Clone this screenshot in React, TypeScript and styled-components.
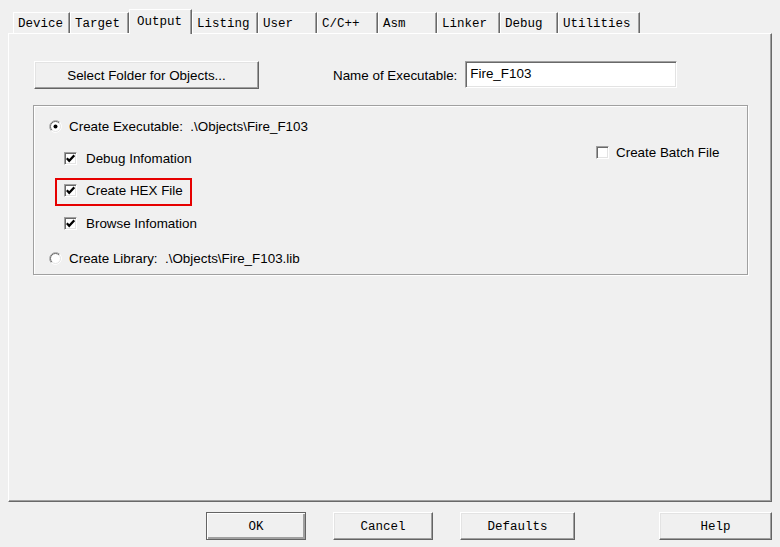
import React from "react";
import styled, { createGlobalStyle } from "styled-components";

const Global = createGlobalStyle`
  html, body { margin: 0; padding: 0; background: #f0f0f0; }
  body { font-family: "Liberation Sans", Arial, sans-serif; }
  * { box-sizing: border-box; }
`;

const SANS = 13.4;

const Window = styled.div`
  width: 780px;
  height: 547px;
  background: #f0f0f0;
  display: flex;
  flex-direction: column;
  overflow: hidden;
  color: #000;
`;

const TabBar = styled.div`
  height: 33px;
  padding: 9px 0 0 13px;
  display: flex;
  align-items: flex-end;
`;

const Tab = styled.div<{ $w: number; $active?: boolean }>`
  width: ${(p) => p.$w}px;
  height: ${(p) => (p.$active ? 25 : 21)}px;
  margin-bottom: ${(p) => (p.$active ? -1 : 0)}px;
  position: relative;
  background: #f0f0f0;
  border-top: 1px solid #fff;
  border-left: 1px solid #fff;
  border-right: 1px solid #696969;
  box-shadow: inset -1px 0 0 #a0a0a0;
  padding: ${(p) => (p.$active ? "0 0 1px 7px" : "2px 0 0 4px")};
  display: flex;
  align-items: center;
  font: 12.5px "Liberation Mono", "Courier New", monospace;
  white-space: pre;
`;

const Panel = styled.div`
  margin: 0 8px;
  height: 469px;
  background: #f0f0f0;
  border-top: 1px solid #fff;
  border-left: 1px solid #fff;
  border-right: 1px solid #696969;
  border-bottom: 1px solid #696969;
  box-shadow: inset -1px -1px 0 #a0a0a0;
  padding: 27px 0 0 24px;
  display: flex;
  flex-direction: column;
`;

const TopRow = styled.div`
  display: flex;
  align-items: center;
  height: 28px;
  padding-left: 1px;
`;

const PushButton = styled.button<{ $w: number; $mono?: boolean; $default?: boolean }>`
  width: ${(p) => p.$w}px;
  height: 28px;
  padding: ${(p) => (p.$mono ? "2px 0 0" : "0")};
  margin: 0;
  background: #f0f0f0;
  color: #000;
  border-top: 1px solid ${(p) => (p.$default ? "#646464" : "#fff")};
  border-left: 1px solid ${(p) => (p.$default ? "#646464" : "#fff")};
  border-right: 1px solid #646464;
  border-bottom: 1px solid #646464;
  box-shadow: ${(p) =>
    p.$default
      ? "inset 1px 1px 0 #fff, inset -1px -1px 0 #a0a0a0, inset -2px -2px 0 #a0a0a0"
      : "inset -1px -1px 0 #a0a0a0, inset 1px 1px 0 #e3e3e3"};
  font: ${(p) =>
    p.$mono
      ? `12.5px "Liberation Mono", "Courier New", monospace`
      : `${SANS}px "Liberation Sans", Arial, sans-serif`};
  text-align: center;
  white-space: pre;
`;

const Label = styled.span<{ $ml?: number }>`
  margin-left: ${(p) => p.$ml ?? 0}px;
  font-size: ${SANS}px;
  white-space: pre;
`;

const TextInput = styled.div`
  width: 212px;
  height: 27px;
  margin-left: 8px;
  margin-top: -2px;
  background: #fff;
  border-top: 1px solid #a0a0a0;
  border-left: 1px solid #a0a0a0;
  border-right: 1px solid #fff;
  border-bottom: 1px solid #fff;
  box-shadow: inset 1px 1px 0 #696969, inset -1px -1px 0 #e3e3e3;
  padding: 4px 0 0 4px;
  font-size: ${SANS}px;
  line-height: 15px;
`;

const Group = styled.div`
  margin-top: 16px;
  width: 715px;
  height: 170px;
  border: 1px solid #a0a0a0;
  box-shadow: inset 1px 1px 0 #fff, 1px 1px 0 #fff;
  padding: 10px 0 0 15px;
  display: flex;
`;

const OptionsCol = styled.div`
  width: 547px;
  display: flex;
  flex-direction: column;
`;

const SideCol = styled.div`
  margin-top: 26px;
`;

const OptionRow = styled.div<{ $indent?: boolean; $gap?: number; $mt?: number; $mark?: boolean }>`
  position: relative;
  height: 20px;
  width: fit-content;
  display: flex;
  align-items: center;
  gap: ${(p) => p.$gap ?? (p.$indent ? 9 : 7)}px;
  margin-left: ${(p) => (p.$indent ? 15 : 0)}px;
  margin-top: ${(p) => p.$mt ?? 0}px;
  font-size: ${SANS}px;
  white-space: pre;
  ${(p) =>
    p.$mark
      ? `&::after {
          content: "";
          position: absolute;
          top: -2px;
          bottom: -6px;
          left: -9px;
          right: -9px;
          border: 2px solid #e60000;
          pointer-events: none;
        }`
      : ""}
`;

const Box = styled.span`
  width: 13px;
  height: 13px;
  flex: none;
  background: #fff;
  border-top: 1px solid #a0a0a0;
  border-left: 1px solid #a0a0a0;
  border-right: 1px solid #fff;
  border-bottom: 1px solid #fff;
  box-shadow: inset 1px 1px 0 #696969, inset -1px -1px 0 #e3e3e3;
  display: flex;
  align-items: center;
  justify-content: center;
`;

const Footer = styled.div`
  margin-top: 10px;
  height: 28px;
  display: flex;
  gap: 27px;
  padding: 0 8px 0 206px;
`;

const HelpSlot = styled.div`
  margin-left: auto;
`;

const CheckBox = ({ checked }: { checked?: boolean }) => (
  <Box>
    {checked && (
      <svg width="9" height="9" viewBox="0 0 9 9">
        <path d="M0.8 4.2 L3.2 6.8 L8.3 1.3" stroke="#000" strokeWidth="2.2" fill="none" />
      </svg>
    )}
  </Box>
);

const Radio = ({ checked }: { checked?: boolean }) => (
  <svg width="13" height="13" viewBox="0 0 13 13" style={{ flex: "none" }}>
    <circle cx="6.5" cy="6.5" r="6" fill="#fff" />
    <path d="M2.26 10.74 A6 6 0 0 1 10.74 2.26" stroke="#a0a0a0" fill="none" />
    <path d="M10.74 2.26 A6 6 0 0 1 2.26 10.74" stroke="#ffffff" fill="none" />
    <path d="M2.96 10.04 A5 5 0 0 1 10.04 2.96" stroke="#696969" fill="none" />
    <path d="M10.04 2.96 A5 5 0 0 1 2.96 10.04" stroke="#e3e3e3" fill="none" />
    {checked && <circle cx="6.5" cy="6.5" r="2" fill="#000" />}
  </svg>
);

const tabs: { label: string; w: number; active?: boolean }[] = [
  { label: "Device", w: 57 },
  { label: "Target", w: 59 },
  { label: "Output", w: 63, active: true },
  { label: "Listing", w: 66 },
  { label: "User", w: 59 },
  { label: "C/C++", w: 61 },
  { label: "Asm", w: 59 },
  { label: "Linker", w: 63 },
  { label: "Debug", w: 58 },
  { label: "Utilities", w: 82 },
];

export default function App() {
  return (
    <>
      <Global />
      <Window>
        <TabBar>
          {tabs.map((t) => (
            <Tab key={t.label} $w={t.w} $active={t.active}>
              {t.label}
            </Tab>
          ))}
        </TabBar>
        <Panel>
          <TopRow>
            <PushButton $w={225}>Select Folder for Objects...</PushButton>
            <Label $ml={74}>Name of Executable:</Label>
            <TextInput>Fire_F103</TextInput>
          </TopRow>
          <Group>
            <OptionsCol>
              <OptionRow>
                <Radio checked />
                <span>{"Create Executable:  .\\Objects\\Fire_F103"}</span>
              </OptionRow>
              <OptionRow $indent $mt={12}>
                <CheckBox checked />
                <span>Debug Infomation</span>
              </OptionRow>
              <OptionRow $indent $mt={12} $mark>
                <CheckBox checked />
                <span>Create HEX File</span>
              </OptionRow>
              <OptionRow $indent $mt={13}>
                <CheckBox checked />
                <span>Browse Infomation</span>
              </OptionRow>
              <OptionRow $mt={15}>
                <Radio />
                <span>{"Create Library:  .\\Objects\\Fire_F103.lib"}</span>
              </OptionRow>
            </OptionsCol>
            <SideCol>
              <OptionRow $gap={7}>
                <CheckBox />
                <span>Create Batch File</span>
              </OptionRow>
            </SideCol>
          </Group>
        </Panel>
        <Footer>
          <PushButton $w={100} $mono $default>OK</PushButton>
          <PushButton $w={100} $mono>Cancel</PushButton>
          <PushButton $w={115} $mono>Defaults</PushButton>
          <HelpSlot>
            <PushButton $w={113} $mono>Help</PushButton>
          </HelpSlot>
        </Footer>
      </Window>
    </>
  );
}
